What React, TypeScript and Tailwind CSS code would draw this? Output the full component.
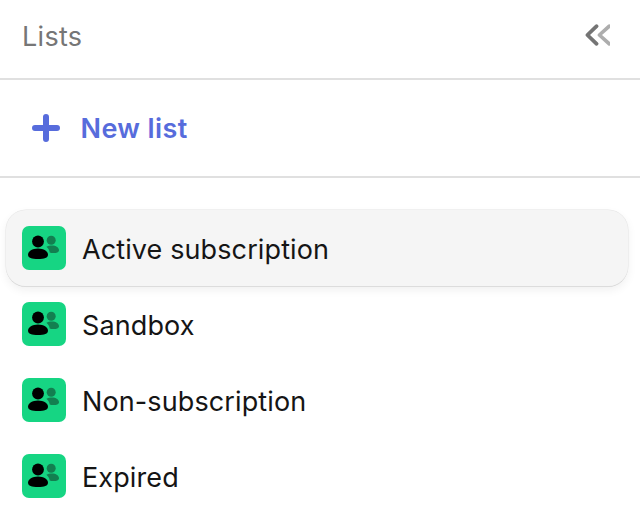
const lists = ["Active subscription", "Sandbox", "Non-subscription", "Expired"];

function PeopleIcon() {
  return (
    <svg className="size-11 shrink-0 rounded-[7px] bg-[#16d583]" viewBox="0 0 44 44">
      <g fill="#137f50">
        <circle cx="29.2" cy="14.2" r="4.5" />
        <path d="M24.4 20.8C26 19.8 27.8 19.4 29.8 19.4C34.2 19.4 37 21.5 37 24.2C37 26.3 34.5 27 31.3 27C29.8 27 28.6 26.8 27.7 26.4C27.4 24.2 26.2 22.3 24.4 20.8Z" />
      </g>
      <circle cx="16" cy="15.5" r="5.9" fill="#000" />
      <path d="M16 22.5C21.6 22.5 26 25.3 26 28.8C26 31.8 22.4 33 16 33C9.6 33 6 31.8 6 28.8C6 25.3 10.4 22.5 16 22.5Z" fill="#000" />
    </svg>
  );
}

export default function App() {
  return (
    <div className="flex h-[524px] w-[640px] flex-col overflow-hidden bg-white font-['Inter',sans-serif] text-[27px] tracking-[0.11px] text-[#151515]">
      <header className="flex h-20 items-center justify-between border-b-2 border-[#e0e0e0] pr-[30px] pb-1 pl-[22px]">
        <h1 className="tracking-[0.3px] text-[#767676]">Lists</h1>
        <svg className="mt-[-5px] h-6 w-[26px]" viewBox="0 0 26 24" fill="none" strokeLinejoin="round" strokeLinecap="round">
          <path d="M25.2 3.2L15.4 12L25.2 20.8" stroke="#adadad" strokeWidth="3.6" />
          <path d="M12.6 3.2L3.4 12L12.6 20.8" stroke="#747474" strokeWidth="3.8" />
        </svg>
      </header>
      <button className="flex h-[98px] items-center border-b-2 border-[#e0e0e0] pl-8 text-[#576cdc]">
        <svg className="size-7" viewBox="0 0 28 28" stroke="currentColor" strokeWidth="6" strokeLinecap="round">
          <path d="M14 3V25M3 14H25" />
        </svg>
        <span className="mt-0.5 ml-[20.5px] font-semibold tracking-[0.38px]">New list</span>
      </button>
      <ul className="mt-8 flex flex-col pr-3 pl-1.5">
        {lists.map((name, i) => (
          <li
            key={name}
            className={
              "flex h-[76px] items-center gap-4 rounded-[20px] pl-4 " +
              (i === 0 ? "bg-[#f5f5f5] shadow-[0_0_0_0.5px_#e4e4e4,0_1px_0_0_#d4d4d4,0_4px_10px_#00000010]" : "")
            }
          >
            <PeopleIcon />
            <span className="pt-1">{name}</span>
          </li>
        ))}
      </ul>
    </div>
  );
}
